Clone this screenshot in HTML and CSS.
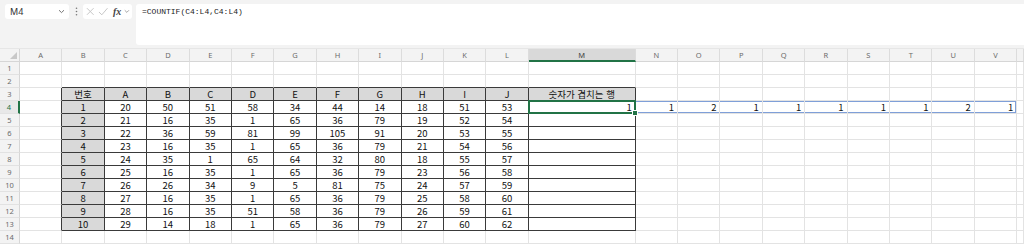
FILE: index.html
```html
<!DOCTYPE html>
<html lang="ko">
<head>
    <meta charset="UTF-8">
    <meta name="viewport" content="width=device-width, initial-scale=1.0">
    <title>COUNTIF</title>
    <link rel="stylesheet" href="styles.css">
</head>
<body>
    <!-- Formula bar -->
    <div class="toolbar">
        <div class="namebox">
            <span>M4</span>
            <svg width="7" height="5" viewBox="0 0 7 5"><path d="M1 1.2 L3.5 3.6 L6 1.2" fill="none" stroke="#666" stroke-width="0.9"/></svg>
        </div>
        <div class="dots">
            <svg width="3" height="9" viewBox="0 0 3 9"><circle cx="1.5" cy="1.2" r="0.8" fill="#777"/><circle cx="1.5" cy="4.5" r="0.8" fill="#777"/><circle cx="1.5" cy="7.8" r="0.8" fill="#777"/></svg>
        </div>
        <div class="fnbox">
            <svg width="9" height="9" viewBox="0 0 9 9"><path d="M1 1 L8 8 M8 1 L1 8" stroke="#c4c4c4" stroke-width="1"/></svg>
            <svg width="11" height="9" viewBox="0 0 11 9"><path d="M1 5 L4 8 L10 1" fill="none" stroke="#c4c4c4" stroke-width="1"/></svg>
            <span class="fx">fx</span>
            <svg width="6" height="5" viewBox="0 0 6 5"><path d="M0.8 1.2 L3 3.4 L5.2 1.2" fill="none" stroke="#888" stroke-width="0.8"/></svg>
        </div>
        <div class="formula">=COUNTIF(C4:L4,C4:L4)</div>
    </div>

    <!-- Sheet -->
    <div class="sheet" id="sheet"></div>

    <script>
        const letters = 'ABCDEFGHIJKLMNOPQRSTUVW'.split('');
        const heads = ['번호', 'A', 'B', 'C', 'D', 'E', 'F', 'G', 'H', 'I', 'J'];
        const data = [
            [1, 20, 50, 51, 58, 34, 44, 14, 18, 51, 53],
            [2, 21, 16, 35, 1, 65, 36, 79, 19, 52, 54],
            [3, 22, 36, 59, 81, 99, 105, 91, 20, 53, 55],
            [4, 23, 16, 35, 1, 65, 36, 79, 21, 54, 56],
            [5, 24, 35, 1, 65, 64, 32, 80, 18, 55, 57],
            [6, 25, 16, 35, 1, 65, 36, 79, 23, 56, 58],
            [7, 26, 26, 34, 9, 5, 81, 75, 24, 57, 59],
            [8, 27, 16, 35, 1, 65, 36, 79, 25, 58, 60],
            [9, 28, 16, 35, 51, 58, 36, 79, 26, 59, 61],
            [10, 29, 14, 18, 1, 65, 36, 79, 27, 60, 62]
        ];
        const spill = [1, 1, 2, 1, 1, 1, 1, 1, 2, 1];

        const sheet = document.getElementById('sheet');

        function add(cls, text) {
            const el = document.createElement('div');
            el.className = cls;
            if (text !== undefined) el.textContent = text;
            sheet.appendChild(el);
            return el;
        }

        // column headers (last one is cut off by the window)
        add('corner');
        letters.forEach((l, i) => {
            if (i === letters.length - 1) add('colhead');
            else add(l === 'M' ? 'colhead sel' : 'colhead', l);
        });

        // rows 1..14
        for (let r = 1; r <= 14; r++) {
            add(r === 4 ? 'rowhead sel' : 'rowhead', r);
            for (let c = 0; c < letters.length; c++) {
                let cls = 'cell';
                let text = '';
                const inTable = r >= 3 && r <= 13 && c >= 1 && c <= 12;

                if (inTable) {
                    cls += ' tb';
                    if (r === 3) {
                        cls += ' th';
                        text = c === 12 ? '숫자가 겹치는 행' : heads[c - 1];
                    } else if (c === 12) {
                        if (r === 4) { cls += ' num active'; text = spill[0]; }
                    } else {
                        text = data[r - 4][c - 1];
                        if (c === 1) cls += ' th';
                    }
                } else {
                    if (r === 2 && c >= 1 && c <= 12) cls += ' above';
                    if (c === 0 && r >= 3 && r <= 13) cls += ' left';
                    if (r === 4 && c >= 13 && c <= 21) {
                        cls += ' num spill';
                        if (c === 21) cls += ' spill-end';
                        text = spill[c - 12];
                    }
                }
                add(cls, text);
            }
        }
    </script>
</body>
</html>
```

FILE: styles.css
```css
body {
    margin: 0;
    padding: 0;
    background: #ffffff;
    font-family: "Noto Sans", "Noto Sans CJK KR", sans-serif;
    overflow: hidden;
}

/* formula bar */

.toolbar {
    display: flex;
    align-items: flex-start;
    height: 49px;
    box-sizing: border-box;
    padding: 4px 0 0 5px;
    background: #f3f3f3;
    border-bottom: 1px solid #e6e6e6;
}

.namebox {
    display: flex;
    align-items: center;
    justify-content: space-between;
    width: 64px;
    height: 15px;
    box-sizing: border-box;
    padding: 0 4px 0 5px;
    background: #fff;
    border-radius: 3px;
    font-size: 9px;
    color: #333;
}

.dots {
    display: flex;
    align-items: center;
    height: 15px;
    margin: 0 5px 0 6px;
}

.fnbox {
    display: flex;
    align-items: center;
    gap: 3px;
    width: 49px;
    height: 15px;
    box-sizing: border-box;
    padding: 0 2px 0 3px;
    background: #fff;
    border-radius: 3px;
}

.fx {
    font-family: "Liberation Serif", serif;
    font-style: italic;
    font-weight: bold;
    font-size: 10px;
    color: #444;
    margin-left: 2px;
}

.formula {
    flex: 1;
    height: 41px;
    margin-left: 4px;
    box-sizing: border-box;
    padding: 3px 6px;
    background: #fff;
    border-radius: 3px 0 0 3px;
    font-family: "Liberation Mono", monospace;
    font-size: 8px;
    color: #222;
}

/* sheet grid */

.sheet {
    display: grid;
    grid-template-columns: 20px repeat(12, 42.4px) 107px repeat(9, 42.4px) 1fr;
    grid-auto-rows: 13px;
    font-family: "Noto Sans CJK KR", "Noto Sans", sans-serif;
    font-size: 9.5px;
    color: #111;
}

.corner,
.colhead,
.rowhead {
    background: #f3f3f3;
    color: #6b6b6b;
    font-family: "Noto Sans", sans-serif;
    font-size: 7.5px;
    line-height: 12px;
    text-align: center;
    box-sizing: border-box;
}

.corner {
    position: relative;
    border-right: 1px solid #d6d6d6;
    border-bottom: 1px solid #d6d6d6;
}

.corner::after {
    content: "";
    position: absolute;
    right: 2px;
    bottom: 2px;
    width: 7px;
    height: 7px;
    background: #c8c8c8;
    clip-path: polygon(100% 0, 100% 100%, 0 100%);
}

.colhead {
    border-right: 1px solid #dcdcdc;
    border-bottom: 1px solid #d6d6d6;
}

.colhead.sel {
    background: #d9d9d9;
    color: #444;
    border-bottom: 2px solid #217346;
}

.rowhead {
    border-right: 1px solid #d6d6d6;
    border-bottom: 1px solid #e2e2e2;
}

.rowhead.sel {
    color: #217346;
    border-right: 2px solid #217346;
    background: #e8e8e8;
}

.cell {
    box-sizing: border-box;
    border-right: 1px solid #e3e3e3;
    border-bottom: 1px solid #e3e3e3;
    line-height: 12px;
    text-align: center;
    white-space: nowrap;
    overflow: hidden;
}

.cell.above {
    border-bottom-color: #3a3a3a;
}

.cell.left {
    border-right-color: #3a3a3a;
}

.cell.tb {
    border-right-color: #3a3a3a;
    border-bottom-color: #3a3a3a;
}

.cell.th {
    background: #d9d9d9;
}

.cell.num {
    text-align: right;
    padding-right: 3px;
}

.cell.spill {
    box-shadow: inset 0 -1px 0 #7f9fd8, inset 0 1px 0 #7f9fd8;
}

.cell.spill-end {
    box-shadow: inset 0 -1px 0 #7f9fd8, inset 0 1px 0 #7f9fd8, inset -1px 0 0 #7f9fd8;
}

.cell.active {
    position: relative;
    overflow: visible;
}

.cell.active::before {
    content: "";
    position: absolute;
    left: -1px;
    top: -1px;
    right: -1px;
    bottom: -1px;
    border: 2px solid #217346;
}

.cell.active::after {
    content: "";
    position: absolute;
    right: -3px;
    bottom: -3px;
    width: 4px;
    height: 4px;
    background: #217346;
    border: 1px solid #fff;
}
```
